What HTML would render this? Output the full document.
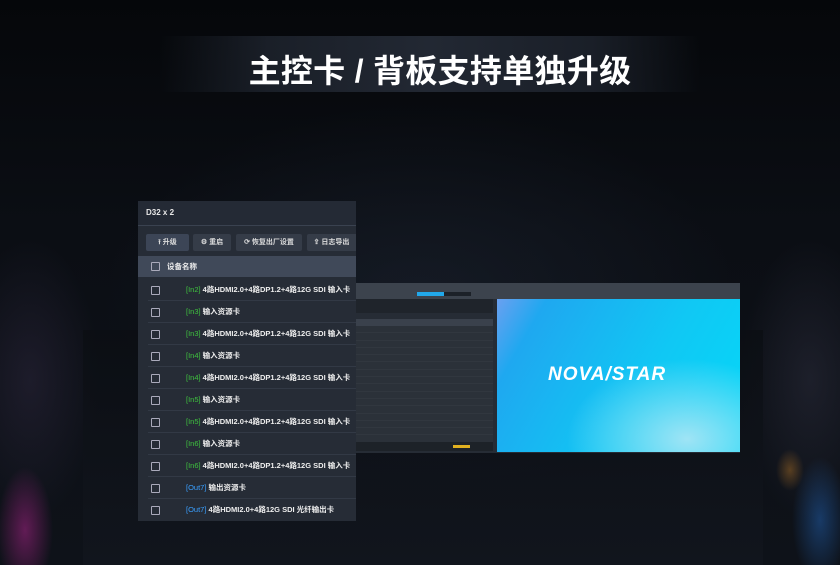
<!DOCTYPE html><html><head><meta charset="utf-8"><style>
*{margin:0;padding:0;box-sizing:border-box}
body{width:840px;height:565px;overflow:hidden;background:#07090d;font-family:"Liberation Sans","Noto Sans CJK SC",sans-serif;position:relative}
.bg{position:absolute;inset:0;background:
radial-gradient(ellipse 40px 90px at 25px 530px,rgba(200,40,160,.45),transparent 70%),
radial-gradient(ellipse 40px 90px at 820px 520px,rgba(40,120,220,.4),transparent 70%),
radial-gradient(ellipse 20px 30px at 790px 470px,rgba(220,140,40,.35),transparent 70%),
radial-gradient(ellipse 100px 200px at 30px 380px,rgba(60,50,80,.35),transparent 70%),
radial-gradient(ellipse 100px 200px at 810px 380px,rgba(60,60,80,.35),transparent 70%),
radial-gradient(ellipse 420px 260px at 420px 300px,rgba(30,38,52,.5),transparent 75%),
linear-gradient(#05070a 0,#0b0e14 40%,#0e1219 100%)}
.stage{position:absolute;left:83px;top:330px;width:680px;height:235px;background:linear-gradient(#0b0e13,#12161e);opacity:.8}
.band{position:absolute;left:160px;top:36px;width:540px;height:56px;background:linear-gradient(90deg,transparent,#1a1f28 20%,#222833 50%,#1a1f28 80%,transparent)}
.title{position:absolute;top:46px;left:0;width:880px;text-align:center;color:#fff;font-size:32px;font-weight:bold;letter-spacing:0.3px}
.lp{position:absolute;left:138px;top:201px;width:218px;height:320px;background:#262c36}
.lp .hd{height:25px;background:#242a35;color:#e8e8e8;font-size:8px;font-weight:bold;padding:7px 8px;border-bottom:1px solid #3a4250}
.btn{position:absolute;top:33px;height:17px;background:#353c48;color:#ddd;font-size:7px;line-height:17px;text-align:center;border-radius:2px;white-space:nowrap;font-weight:bold;overflow:hidden}
.th{position:absolute;top:55px;left:0;width:218px;height:21px;background:#404959;color:#eee;font-size:7.5px;font-weight:bold;line-height:21px;padding-left:29px}
.cb{position:absolute;left:13px;width:9px;height:9px;border:1px solid #aab;border-radius:1px}
.row{position:absolute;left:10px;width:208px;height:22px;border-bottom:1px solid #323945;color:#eee;font-size:7.5px;font-weight:bold;line-height:22px;padding-left:38px;white-space:nowrap}
.row .cb{left:3px}
.g{color:#3fc23f;font-weight:normal}.b{color:#3aa0ff;font-weight:normal}
.rw{position:absolute;left:355px;top:283px;width:385px;height:170px;background:#262c35}
.rw .tb{height:16px;background:#3c434d}
.tab1{position:absolute;left:62px;top:9px;width:27px;height:4px;background:#21a8ea}
.tab2{position:absolute;left:89px;top:9px;width:27px;height:4px;background:#1c2128}
.img{position:absolute;left:142px;top:16px;width:243px;height:153px;background:radial-gradient(ellipse 120px 80px at 190px 140px,#9fe4f5,transparent),linear-gradient(120deg,#6aa0f0 0,#1fa8f0 15%,#10c8f4 60%,#05d8f8)}
.logo{position:absolute;left:51px;top:65px;color:#fff;font-style:italic;font-weight:bold;font-size:19px;letter-spacing:1px}
.tbl{position:absolute;left:0;top:36px;width:138px;height:132px;background:#2b3139}
.tbl .h{height:7px;background:#3a414c}
.tbl .l{height:7.3px;border-bottom:1px solid #31373f}
</style></head><body>
<div class="bg"></div><div class="stage"></div>
<div class="band"></div><div class="title">主控卡 / 背板支持单独升级</div>
<div class="rw"><div class="tb"></div><div class="tab1"></div><div class="tab2"></div>
<div style="position:absolute;left:0;top:16px;width:138px;height:14px;background:#1f242b"></div>
<div class="tbl"><div class="h"></div><div class="l"></div><div class="l"></div><div class="l"></div><div class="l"></div><div class="l"></div><div class="l"></div><div class="l"></div><div class="l"></div><div class="l"></div><div class="l"></div><div class="l"></div><div class="l"></div><div class="l"></div><div class="l"></div><div class="l"></div>
<div style="position:absolute;left:0;bottom:0;width:138px;height:9px;background:#1d2228"></div>
<div style="position:absolute;left:98px;bottom:3px;width:17px;height:3px;background:#e0b020"></div></div>
<div class="img"><div class="logo">NOVA/STAR</div></div></div>
<div class="lp"><div class="hd">D32 x 2</div>
<div class="btn" style="left:8px;width:43px;background:#3c4556">⭱ 升级</div>
<div class="btn" style="left:55px;width:38px">⚙ 重启</div>
<div class="btn" style="left:98px;width:66px">⟳ 恢复出厂设置</div>
<div class="btn" style="left:169px;width:49px;border-radius:2px 0 0 2px">⇪ 日志导出</div>
<div class="th"><span class="cb" style="top:6px"></span>设备名称</div>
<div class="row" style="top:78px"><span class="cb" style="top:7px"></span><span class="g">[In2]</span> 4路HDMI2.0+4路DP1.2+4路12G SDI 输入卡</div>
<div class="row" style="top:100px"><span class="cb" style="top:7px"></span><span class="g">[In3]</span> 输入资源卡</div>
<div class="row" style="top:122px"><span class="cb" style="top:7px"></span><span class="g">[In3]</span> 4路HDMI2.0+4路DP1.2+4路12G SDI 输入卡</div>
<div class="row" style="top:144px"><span class="cb" style="top:7px"></span><span class="g">[In4]</span> 输入资源卡</div>
<div class="row" style="top:166px"><span class="cb" style="top:7px"></span><span class="g">[In4]</span> 4路HDMI2.0+4路DP1.2+4路12G SDI 输入卡</div>
<div class="row" style="top:188px"><span class="cb" style="top:7px"></span><span class="g">[In5]</span> 输入资源卡</div>
<div class="row" style="top:210px"><span class="cb" style="top:7px"></span><span class="g">[In5]</span> 4路HDMI2.0+4路DP1.2+4路12G SDI 输入卡</div>
<div class="row" style="top:232px"><span class="cb" style="top:7px"></span><span class="g">[In6]</span> 输入资源卡</div>
<div class="row" style="top:254px"><span class="cb" style="top:7px"></span><span class="g">[In6]</span> 4路HDMI2.0+4路DP1.2+4路12G SDI 输入卡</div>
<div class="row" style="top:276px"><span class="cb" style="top:7px"></span><span class="b">[Out7]</span> 输出资源卡</div>
<div class="row" style="top:298px;border:0"><span class="cb" style="top:7px"></span><span class="b">[Out7]</span> 4路HDMI2.0+4路12G SDI 光纤输出卡</div>
</div>
</body></html>
